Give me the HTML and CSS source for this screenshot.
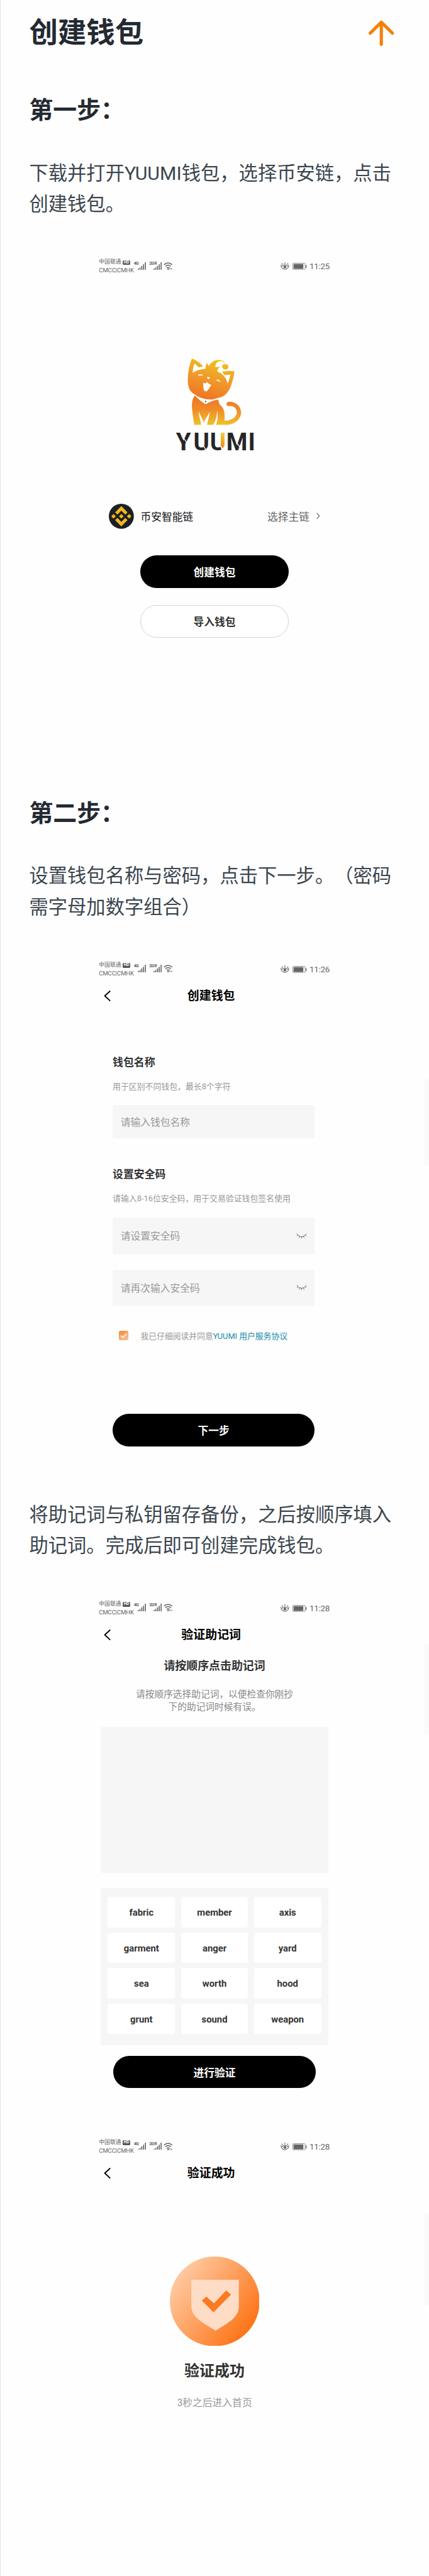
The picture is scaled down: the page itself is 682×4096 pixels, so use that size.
FILE: index.html
```html
<!DOCTYPE html>
<html lang="zh-CN">
<head>
<meta charset="utf-8">
<title>创建钱包</title>
<link rel="stylesheet" href="styles.css">
</head>
<body>
<svg class="defs" aria-hidden="true">
  <defs>
    <linearGradient id="head" x1="0.65" y1="0" x2="0.35" y2="1">
      <stop offset="0" stop-color="#efc51c"/><stop offset="0.5" stop-color="#f0992a"/><stop offset="1" stop-color="#ee7424"/>
    </linearGradient>
    <linearGradient id="torso" x1="0" y1="0" x2="0" y2="1">
      <stop offset="0" stop-color="#ee7424"/><stop offset="0.45" stop-color="#f08a28"/><stop offset="1" stop-color="#efc02c"/>
    </linearGradient>
    <linearGradient id="stem" x1="0" y1="0" x2="0" y2="1">
      <stop offset="0" stop-color="#f0cf28"/><stop offset="1" stop-color="#ee8426"/>
    </linearGradient>
    <linearGradient id="badge" x1="0.1" y1="0.2" x2="0.9" y2="0.8">
      <stop offset="0" stop-color="#ffc9a0"/><stop offset="1" stop-color="#fd7417"/>
    </linearGradient>
    <linearGradient id="tick" x1="0" y1="0" x2="0.6" y2="1">
      <stop offset="0" stop-color="#f58634"/><stop offset="1" stop-color="#fbbd90"/>
    </linearGradient>
    <symbol id="bars" viewBox="0 0 21 19">
      <path d="M1.5 16v3M5.7 13v6M10.2 9v10M14.6 5v14M19.2 0v19" stroke="#666" stroke-width="2.6" fill="none"/>
    </symbol>
    <symbol id="wifi" viewBox="0 0 24 20">
      <path d="M1.2 6.2Q11.5-3 21.8 6.2M4.5 10.2Q11.5 4 18.5 10.2M8 14Q11.5 11 15 14" stroke="#666" stroke-width="2.3" fill="none"/>
      <circle cx="11.5" cy="17" r="2" fill="#666"/><path d="M17 14v5l-3-2.5zM19.500 14v5l3-2.500z" fill="#777"/>
    </symbol>
    <symbol id="eye" viewBox="0 0 22 19">
      <path d="M1.500 11.500Q11 2 20.500 11.500Q11 24 1.500 11.500ZM11 5V0M5.500 6 3 2.500M16.500 6 19 2.500M2 9 .5 6.500M20 9l1.500-2.500" stroke="#666" stroke-width="1.800" fill="none"/>
      <circle cx="11" cy="12" r="3.600" fill="#666"/>
    </symbol>
    <symbol id="battery" viewBox="0 0 36 18">
      <rect x=".8" y=".8" width="31" height="16.400" rx="2.500" stroke="#777" stroke-width="1.300" fill="none"/>
      <rect x="2.800" y="2.800" width="24.500" height="12.400" fill="#666"/><path d="M34.500 5v8" stroke="#666" stroke-width="2.200"/>
    </symbol>
    <symbol id="back" viewBox="0 0 17 27">
      <path d="M15.500 1.500 2.500 13.500 15.500 25.500" stroke="#000" stroke-width="3" fill="none" stroke-linecap="round" stroke-linejoin="round"/>
    </symbol>
    <symbol id="closed-eye" viewBox="0 0 27 14">
      <path d="M1 1Q13.500 16.500 26 1M4.500 4.500 1.500 7.500M9 7.500 7 11.500M13.500 9v4.500M18 7.500l2 4M22.500 4.500l3 3" stroke="#666" stroke-width="1.500" fill="none"/>
    </symbol>
  </defs>
</svg>

<main class="page">
  <header class="header">
    <h1 class="title">创建钱包</h1>
    <svg class="arrow" viewBox="0 0 64 65"><path d="M32 61V5M4 33 32 5 60 33" fill="none" stroke="#f57f06" stroke-width="8" stroke-linecap="round" stroke-linejoin="round"/></svg>
  </header>

  <h2 class="step step-one">第一步：</h2>
  <p class="text">下载并打开YUUMI钱包，选择币安链，点击创建钱包。</p>

  <section class="phone">
    <div class="status">
      <div class="carrier"><span class="carrier-cn">中国联通<b class="hd">HD</b></span><span class="carrier-en">CMCC|CMHK</span></div>
      <b class="net">4G</b><svg class="bars"><use href="#bars"/></svg>
      <b class="net net-roam">2G R</b><svg class="bars"><use href="#bars"/></svg>
      <svg class="wifi"><use href="#wifi"/></svg>
      <svg class="eye"><use href="#eye"/></svg><svg class="battery"><use href="#battery"/></svg>
      <span class="time">11:25</span>
    </div>
    <svg class="logo" viewBox="0 0 750 840">
      <path fill="url(#head)" d="M190 68C173 105 157 180 160 245C162 300 185 325 215 340C250 368 300 378 340 376C365 375 375 368 388 364C450 357 477 300 490 260C505 215 510 190 512 163C480 158 450 161 418 168L437 191Q460 192 481 188Q475 225 460 256C452 215 425 180 383 166Q382 143 406 131L368 132C366 90 405 76 432 96Q438 103 421 118Q417 128 421 138A24 21 0 1 0 428 112Q442 98 432 90C400 66 345 74 319 123L301 98Q293 120 293 145C255 147 220 157 197 177Q195 140 210 105Q225 115 239 133L275 127C255 103 222 76 190 68Z"/>
      <path fill="url(#torso)" d="M212 347C190 375 190 410 191 440C195 490 204 540 208 568H260C258 535 240 500 243 468C258 510 277 530 280 552C290 522 312 500 325 468C324 510 308 540 305 568H352C367 540 380 510 380 462C390 500 384 540 372 568H440C520 570 562 520 562 475C562 420 510 390 470 393C443 398 448 430 470 426C510 420 530 448 530 475C528 510 490 537 436 537C441 490 438 440 400 414L388 377C360 383 330 392 295 412C260 395 235 365 212 347Z"/>
      <path fill="#fff" d="M236 200C242 178 267 180 274 199Q255 188 236 200ZM372 235C380 219 402 223 406 248Q395 232 372 235ZM304 205 328 209Q324 221 315 222Q306 218 304 205ZM275 250Q292 260 308 245Q317 263 338 265C325 285 315 303 303 313Q279 320 278 290Z"/>
      <path fill="#98612d" d="M294 383 300 392 294 402 288 392Z"/>
      <text class="wordmark" x="70 202 327 450 615" y="762">YUUMI</text>
      <path fill="#fefefe" d="M408 628H440V742L415 757L404 732Z"/>
      <path fill="url(#stem)" d="M408 632H436V722L424 747L408 724Z"/>
      <path stroke="#fefefe" stroke-width="6" d="M125 665 153 704M276 724 300 762M528 700 556 742"/>
    </svg>
    <div class="chain">
      <svg class="coin" viewBox="0 0 32 32"><circle cx="16" cy="16" r="16" fill="#1e1f24"/><path transform="translate(16 16) scale(1.290) translate(-16 -16)" fill="#efb81c" d="M12.116 14.404 16 10.520l3.886 3.886 2.260-2.260L16 6l-6.144 6.144zM6 16l2.260-2.260L10.520 16l-2.260 2.260zM12.116 17.596 16 21.480l3.886-3.886 2.260 2.259L16 26l-6.147-6.147zM21.480 16l2.260-2.260L26 16l-2.260 2.260zM18.294 16 16 18.294 13.705 16 16 13.706z"/></svg>
      <span class="chain-name">币安智能链</span>
      <span class="chain-pick">选择主链</span>
      <svg class="chevron" viewBox="0 0 9 17"><path d="M1 1 7.500 8.500 1 16" fill="none" stroke="#666" stroke-width="1.800"/></svg>
    </div>
    <div class="button button-create">创建钱包</div>
    <div class="button button-import">导入钱包</div>
  </section>

  <h2 class="step step-two">第二步：</h2>
  <p class="text">设置钱包名称与密码，点击下一步。（密码需字母加数字组合）</p>

  <section class="phone">
    <div class="status">
      <div class="carrier"><span class="carrier-cn">中国联通<b class="hd">HD</b></span><span class="carrier-en">CMCC|CMHK</span></div>
      <b class="net">4G</b><svg class="bars"><use href="#bars"/></svg>
      <b class="net net-roam">2G R</b><svg class="bars"><use href="#bars"/></svg>
      <svg class="wifi"><use href="#wifi"/></svg>
      <svg class="eye"><use href="#eye"/></svg><svg class="battery"><use href="#battery"/></svg>
      <span class="time">11:26</span>
    </div>
    <div class="navbar"><svg class="back"><use href="#back"/></svg><span class="nav-title">创建钱包</span></div>
    <div class="form">
      <div class="label label-name">钱包名称</div>
      <div class="hint">用于区别不同钱包，最长8个字符</div>
      <div class="field field-name">请输入钱包名称</div>
      <div class="label label-code">设置安全码</div>
      <div class="hint">请输入8-16位安全码，用于交易验证钱包签名使用</div>
      <div class="field field-code">请设置安全码<svg class="closed-eye"><use href="#closed-eye"/></svg></div>
      <div class="field field-repeat">请再次输入安全码<svg class="closed-eye"><use href="#closed-eye"/></svg></div>
      <div class="agree">
        <svg class="checkbox" viewBox="0 0 24 24"><rect width="24" height="24" rx="4" fill="url(#tick)"/><path d="M5 12.500 10 17 19.500 7.500" fill="none" stroke="#fff" stroke-width="2.600"/></svg>
        <span>我已仔细阅读并同意<span class="link">YUUMI 用户服务协议</span></span>
      </div>
      <div class="button button-next">下一步</div>
    </div>
  </section>

  <p class="text text-backup">将助记词与私钥留存备份，之后按顺序填入助记词。完成后即可创建完成钱包。</p>

  <section class="phone">
    <div class="status status-verify">
      <div class="carrier"><span class="carrier-cn">中国联通<b class="hd">HD</b></span><span class="carrier-en">CMCC|CMHK</span></div>
      <b class="net">4G</b><svg class="bars"><use href="#bars"/></svg>
      <b class="net net-roam">2G R</b><svg class="bars"><use href="#bars"/></svg>
      <svg class="wifi"><use href="#wifi"/></svg>
      <svg class="eye"><use href="#eye"/></svg><svg class="battery"><use href="#battery"/></svg>
      <span class="time">11:28</span>
    </div>
    <div class="navbar"><svg class="back"><use href="#back"/></svg><span class="nav-title">验证助记词</span></div>
    <div class="verify-title">请按顺序点击助记词</div>
    <div class="verify-hint">请按顺序选择助记词，以便检查你刚抄<br>下的助记词时候有误。</div>
    <div class="answer"></div>
    <div class="words">
      <span class="word">fabric</span><span class="word">member</span><span class="word">axis</span>
      <span class="word">garment</span><span class="word">anger</span><span class="word">yard</span>
      <span class="word">sea</span><span class="word">worth</span><span class="word">hood</span>
      <span class="word">grunt</span><span class="word">sound</span><span class="word">weapon</span>
    </div>
    <div class="button button-verify">进行验证</div>
  </section>

  <section class="phone">
    <div class="status status-done">
      <div class="carrier"><span class="carrier-cn">中国联通<b class="hd">HD</b></span><span class="carrier-en">CMCC|CMHK</span></div>
      <b class="net">4G</b><svg class="bars"><use href="#bars"/></svg>
      <b class="net net-roam">2G R</b><svg class="bars"><use href="#bars"/></svg>
      <svg class="wifi"><use href="#wifi"/></svg>
      <svg class="eye"><use href="#eye"/></svg><svg class="battery"><use href="#battery"/></svg>
      <span class="time">11:28</span>
    </div>
    <div class="navbar"><svg class="back"><use href="#back"/></svg><span class="nav-title">验证成功</span></div>
    <svg class="badge" viewBox="427 5682 226 226">
      <circle cx="540" cy="5795" r="113" fill="url(#badge)"/>
      <path fill="#ffdcc6" d="M481 5740.500H600.700V5807C600.700 5838 570 5850 542 5868.700C514 5850 481 5836 481 5807Z"/>
      <path fill="#fc7a20" d="M507.500 5793 519 5783 538 5800 568.700 5767.700 581 5778 537 5822.500Z"/>
    </svg>
    <div class="done-title">验证成功</div>
    <div class="done-hint">3秒之后进入首页</div>
  </section>

  <i class="thumb thumb-a"></i><i class="thumb thumb-b"></i><i class="thumb thumb-c"></i>
</main>
</body>
</html>
```
FILE: styles.css
```css
/* 1rem stands for 100 design pixels of a 1080-wide layout */
html { font-size: 63.15px; }
* { box-sizing: border-box; }
body {
  margin: 0;
  background: #fefefe;
  font-family: Roboto, "Noto Sans CJK SC", sans-serif;
  text-spacing-trim: space-all;
}
svg { display: block; }
.defs { position: absolute; width: 0; height: 0; }
.page {
  position: relative;
  width: 682px;
  height: 4096px;
  overflow: hidden;
  border-left: 1px solid #dfe3e6;
}
.header {
  display: flex;
  align-items: center;
  justify-content: space-between;
  height: 1.66rem;
  padding: 0 0.88rem 0 0.72rem;
}
.title { margin: 0; font-size: 0.72rem; line-height: 1rem; font-weight: 700; color: #242a31; }
.arrow { width: 0.64rem; height: 0.65rem; }
.step { margin: 0 0 0 0.72rem; font-size: 0.6rem; line-height: 0.8rem; font-weight: 700; color: #242a31; }
.step-one { margin-top: 0.72rem; }
.step-two { margin-top: 4.02rem; }
.text { margin: 0.79rem 0.7rem 0 0.72rem; font-size: 0.48rem; line-height: 0.78rem; color: #3b454e; }
.text-backup { margin-top: 1.33rem; }

.phone { width: 5.82rem; margin-left: 2.475rem; }

/* device status bar */
.status {
  display: flex;
  align-items: flex-start;
  height: 0.42rem;
  margin-top: 0.97rem;
  color: #666;
  white-space: nowrap;
}
.status-verify { margin-top: 0.98rem; }
.status-done { margin-top: 1.27rem; }
.carrier { display: flex; flex-direction: column; width: 0.88rem; }
.carrier-cn { display: flex; align-items: center; height: 0.22rem; font-size: 0.14rem; line-height: 0.22rem; }
.carrier-en { height: 0.2rem; font-size: 0.15rem; line-height: 0.2rem; letter-spacing: -0.001rem; }
.hd {
  width: 0.19rem;
  height: 0.12rem;
  margin-left: 0.04rem;
  border-radius: 0.025rem;
  background: #555;
  color: #fff;
  font-size: 0.105rem;
  line-height: 0.12rem;
  text-align: center;
}
.net { width: 0.105rem; margin-top: 0.07rem; font-size: 0.11rem; line-height: 0.14rem; letter-spacing: -0.012rem; }
.net-roam { width: 0.105rem; margin-left: 0.07rem; }
.bars { width: 0.21rem; height: 0.19rem; margin-top: 0.1rem; }
.wifi { width: 0.24rem; height: 0.2rem; margin: 0.1rem 0 0 0.05rem; }
.eye { width: 0.22rem; height: 0.19rem; margin: 0.11rem 0.085rem 0 auto; }
.battery { width: 0.36rem; height: 0.18rem; margin: 0.12rem 0.07rem 0 0; }
.time { width: 0.52rem; margin-top: 0.075rem; font-size: 0.212rem; line-height: 0.28rem; letter-spacing: -0.004rem; }

.logo { width: 2.5rem; height: 2.8rem; margin: 1.88rem 0 0 1.71rem; }
.wordmark { font-size: 183px; font-weight: 700; fill: #262626; }

.chain {
  display: flex;
  align-items: center;
  height: 0.64rem;
  margin-top: 1.08rem;
  padding: 0 0.25rem;
  font-size: 0.265rem;
}
.coin { width: 0.63rem; height: 0.63rem; margin-right: 0.17rem; }
.chain-name { color: #111; }
.chain-pick { margin-left: auto; color: #666; }
.chevron { width: 0.09rem; height: 0.17rem; margin-left: 0.18rem; }

.button {
  display: flex;
  align-items: center;
  justify-content: center;
  height: 0.82rem;
  border-radius: 0.41rem;
  background: #000;
  color: #fff;
  font-size: 0.265rem;
  font-weight: 700;
}
.button-create { width: 3.74rem; margin: 0.66rem auto 0; }
.button-import { width: 3.74rem; margin: 0.44rem auto 0; border: 1px solid #d4d4d4; background: #fff; color: #333; }
.button-next { margin-top: 1.82rem; }
.button-verify { width: 5.09rem; height: 0.8rem; margin: 0.28rem auto 0; }

.navbar {
  display: grid;
  grid-template-columns: 0.17rem 1fr;
  align-items: center;
  height: 0.5rem;
  margin-top: 0.21rem;
  padding: 0 0.47rem 0 0.13rem;
}
.back { width: 0.17rem; height: 0.27rem; }
.nav-title { text-align: center; font-size: 0.3rem; line-height: 0.5rem; font-weight: 700; color: #000; }

.form { margin: 0 0.39rem 0 0.345rem; }
.label { font-size: 0.267rem; line-height: 0.4rem; font-weight: 700; color: #333; }
.label-name { margin-top: 1.23rem; }
.label-code { margin-top: 0.71rem; }
.hint { margin-top: 0.26rem; font-size: 0.204rem; line-height: 0.3rem; color: #999; white-space: nowrap; }
.field {
  display: flex;
  align-items: center;
  justify-content: space-between;
  padding: 0 0.2rem;
  border-radius: 0.04rem;
  background: #f6f6f6;
  font-size: 0.25rem;
  color: #999;
}
.field-name { height: 0.84rem; margin-top: 0.31rem; }
.field-code { height: 0.92rem; margin-top: 0.32rem; }
.field-repeat { height: 0.91rem; margin-top: 0.39rem; }
.closed-eye { width: 0.27rem; height: 0.14rem; }
.agree {
  display: flex;
  align-items: center;
  gap: 0.3rem;
  height: 0.3rem;
  margin-top: 0.6rem;
  padding-left: 0.165rem;
  font-size: 0.203rem;
  color: #999;
  white-space: nowrap;
}
.checkbox { width: 0.24rem; height: 0.24rem; }
.link { color: #158aa9; }

.verify-title { margin-top: 0.33rem; text-align: center; font-size: 0.284rem; line-height: 0.4rem; font-weight: 700; color: #333; }
.verify-hint { margin-top: 0.375rem; text-align: center; font-size: 0.233rem; line-height: 0.31rem; color: #888; }
.answer { width: 5.74rem; height: 3.68rem; margin: 0.345rem auto 0; background: #f6f6f6; border-radius: 0.04rem; }
.words {
  display: grid;
  grid-template-columns: repeat(3, 1fr);
  grid-template-rows: repeat(4, 0.77rem);
  gap: 0.125rem 0.15rem;
  width: 5.74rem;
  height: 3.95rem;
  margin: 0.38rem auto 0;
  padding: 0.22rem 0.185rem;
  background: #f6f6f6;
  border-radius: 0.04rem;
}
.word {
  display: flex;
  align-items: center;
  justify-content: center;
  padding-top: 0.02rem;
  border-radius: 0.06rem;
  background: #fff;
  color: #333;
  font-size: 0.235rem;
  font-weight: 700;
}

.badge { width: 2.26rem; height: 2.26rem; margin: 1.84rem auto 0; }
.done-title { margin-top: 0.39rem; text-align: center; font-size: 0.38rem; line-height: 0.5rem; font-weight: 700; color: #333; }
.done-hint { margin-top: 0.4rem; text-align: center; font-size: 0.25rem; line-height: 0.3rem; color: #999; }

/* faint edge tabs lying over the right margin */
.thumb { position: absolute; right: 0; width: 0.11rem; background: #fafafa; }
.thumb-a { top: 27.18rem; height: 2.17rem; }
.thumb-b { top: 41.4rem; height: 2.29rem; }
.thumb-c { top: 55.72rem; height: 2.32rem; }
```
